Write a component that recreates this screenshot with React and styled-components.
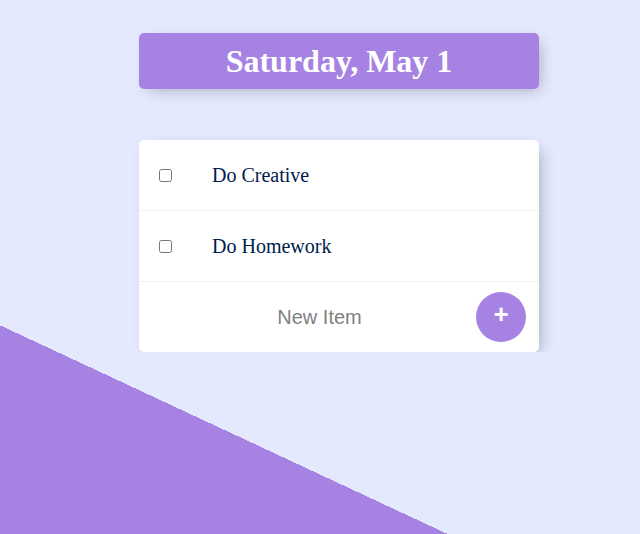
import { useState } from 'react';
import styled, { createGlobalStyle } from 'styled-components';

const GlobalStyle = createGlobalStyle`
  html {
    height: 100%;
    overflow: hidden;
    background-color: #E4E9FD;
    background-image: linear-gradient(25deg, #A683E3 50%, #E4E9FD 50%);
    background-size: 640px 949px;
    background-repeat: no-repeat;
  }
  body {
    margin: 0;
    font-family: "Liberation Serif", "Times New Roman", serif;
  }
`

const Page = styled.main`
  padding: 33px 0 0 139px;
`

const Box = styled.section`
  width: 400px;
  background: ${props => props.heading ? '#A683E3' : '#fff'};
  border-radius: 5px;
  box-shadow: 5px 5px 15px -5px rgba(0, 0, 0, 0.3);
  margin-bottom: ${props => props.heading ? '51px' : '0'};
`

const Title = styled.h1`
  margin: 0;
  padding: 10px;
  text-align: center;
  color: #fff;
  font-size: 32px;
  line-height: 36px;
  font-weight: bold;
`

const Item = styled.div`
  min-height: 70px;
  display: flex;
  align-items: center;
  border-bottom: 1px solid #F1F1F1;
  &:last-child {
    border-bottom: 0;
  }
  input[type="checkbox"] {
    margin: 20px;
    width: 13px;
    height: 13px;
  }
`

const Text = styled.p`
  margin: 0;
  padding: 20px;
  font-size: 20px;
  color: #00204a;
  text-decoration: ${props => props.done ? 'line-through' : 'none'};
  text-decoration-color: #A683E3;
`

const Form = styled.form`
  display: flex;
  align-items: center;
  min-height: 70px;
  padding: 0 13px 0 24px;
`

const NewInput = styled.input`
  width: 313px;
  height: 60px;
  padding: 0;
  border: none;
  background: transparent;
  text-align: center;
  font-family: "Liberation Sans", Arial, sans-serif;
  font-size: 20px;
  &::placeholder {
    color: grey;
    opacity: 1;
  }
  &:focus {
    outline: none;
    box-shadow: inset 0 -3px 0 0 #A683E3;
  }
`

const AddButton = styled.button`
  width: 50px;
  height: 50px;
  border-radius: 50%;
  border: 0;
  padding: 0 0 6px;
  background-color: #A683E3;
  color: #fff;
  font-family: "Liberation Sans", Arial, sans-serif;
  font-size: 26px;
  font-weight: bold;
  line-height: 1;
  cursor: pointer;
`

const App = () => {
  const [items, setItems] = useState([
    { text: 'Do Creative', done: false },
    { text: 'Do Homework', done: false },
  ]);
  const [newItem, setNewItem] = useState('');

  const toggle = (index) => {
    setItems(items.map((item, i) => i === index ? { ...item, done: !item.done } : item));
  }
  const handleSubmit = (e) => {
    e.preventDefault();
    if (!newItem) return;
    setItems([...items, { text: newItem, done: false }]);
    setNewItem('');
  }

  return (
    <>
      <GlobalStyle />
      <Page>
        <Box heading>
          <Title>Saturday, May 1</Title>
        </Box>
        <Box>
          {items.map((item, index) => (
            <Item key={index}>
              <input type='checkbox' checked={item.done} onChange={() => toggle(index)} />
              <Text done={item.done}>{item.text}</Text>
            </Item>
          ))}
          <Form onSubmit={handleSubmit}>
            <NewInput
              type='text'
              placeholder='New Item'
              autoComplete='off'
              value={newItem}
              onChange={(e) => setNewItem(e.target.value)}
            />
            <AddButton type='submit'>+</AddButton>
          </Form>
        </Box>
      </Page>
    </>
  )
}

export default App;
